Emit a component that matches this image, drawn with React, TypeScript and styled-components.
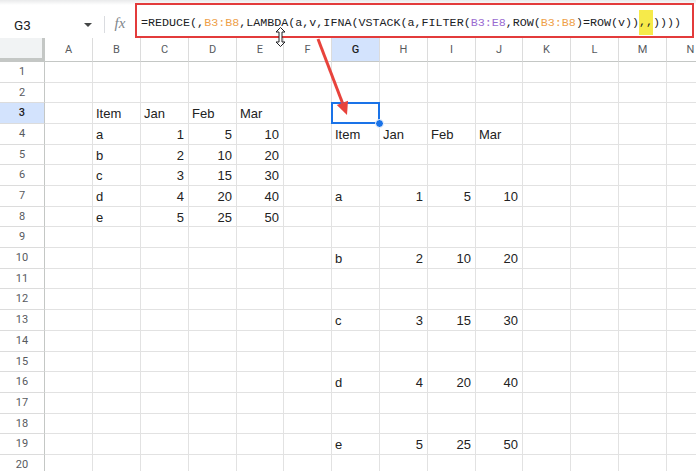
import React from "react";
import styled, { createGlobalStyle } from "styled-components";

const GlobalStyle = createGlobalStyle`
  html, body {
    margin: 0;
    padding: 0;
    background: #ffffff;
  }
  body {
    font-family: "Liberation Sans", Arial, sans-serif;
  }
`;

const COLS = ["A", "B", "C", "D", "E", "F", "G", "H", "I", "J", "K", "L", "M", "N"];
const COL_WIDTHS = [48, 48, 48, 48, 47, 48, 48, 48, 48, 47, 48, 48, 48, 48];
const ROW_COUNT = 20;
const ROW_HEIGHTS = Array.from({ length: ROW_COUNT }, (_, i) =>
  Math.round((i + 1) * 20.68) - Math.round(i * 20.68)
);

const SELECTED_COL = "G";
const SELECTED_ROW = 3;

const data: Record<string, string | number> = {
  B3: "Item", C3: "Jan", D3: "Feb", E3: "Mar",
  B4: "a", C4: 1, D4: 5, E4: 10,
  B5: "b", C5: 2, D5: 10, E5: 20,
  B6: "c", C6: 3, D6: 15, E6: 30,
  B7: "d", C7: 4, D7: 20, E7: 40,
  B8: "e", C8: 5, D8: 25, E8: 50,
  G4: "Item", H4: "Jan", I4: "Feb", J4: "Mar",
  G7: "a", H7: 1, I7: 5, J7: 10,
  G10: "b", H10: 2, I10: 10, J10: 20,
  G13: "c", H13: 3, I13: 15, J13: 30,
  G16: "d", H16: 4, I16: 20, J16: 40,
  G19: "e", H19: 5, I19: 25, J19: 50,
};

const Page = styled.div`
  position: relative;
  width: 696px;
  height: 471px;
  overflow: hidden;
  background: #fff;
`;

const TopBar = styled.div`
  display: flex;
  align-items: stretch;
  height: 38px;
  padding-top: 3px;
  box-sizing: border-box;
  background: linear-gradient(#e9eaeb 0px, #ffffff 5px);
`;

const NameBox = styled.div`
  width: 105px;
  height: 17px;
  align-self: flex-start;
  margin-top: 13px;
  display: flex;
  align-items: center;
  justify-content: space-between;
  padding: 0 12px 0 14px;
  box-sizing: border-box;
  border-right: 1px solid #dadce0;
  font-family: Roboto, "Liberation Sans", sans-serif;
  font-size: 13.5px;
  color: #202124;
`;

const Caret = styled.span`
  width: 0;
  height: 0;
  border-left: 4px solid transparent;
  border-right: 4px solid transparent;
  border-top: 4px solid #444746;
`;

const Fx = styled.div`
  width: 30px;
  display: flex;
  align-items: center;
  justify-content: center;
  padding-top: 5px;
  font-family: "Liberation Serif", "DejaVu Serif", serif;
  font-style: italic;
  font-size: 15px;
  color: #80868b;
`;

const FormulaBox = styled.div`
  flex: 1;
  margin-right: 2px;
  border: 2px solid #e33b3b;
  display: flex;
  align-items: center;
  padding: 4px 0 0 4px;
  box-sizing: border-box;
  font-family: "Liberation Mono", "DejaVu Sans Mono", monospace;
  font-size: 11.7px;
  color: #202124;
  white-space: pre;
  overflow: hidden;
`;

const Ref = styled.span<{ $tone: "orange" | "purple" }>`
  color: ${(p) => (p.$tone === "orange" ? "#eea049" : "#9a6bd1")};
`;

const Mark = styled.span`
  background: #f6ea4a;
  padding: 5px 0 6px;
`;

const Grid = styled.div`
  display: grid;
  grid-template-columns: 45px ${COL_WIDTHS.map((w) => `${w}px`).join(" ")};
  grid-template-rows: 24px ${ROW_HEIGHTS.map((h) => `${h}px`).join(" ")};
`;

const Corner = styled.div`
  box-sizing: border-box;
  background: #f1f3f4;
  border-right: 3px solid #c4c7c5;
  border-bottom: 4px solid #c4c7c5;
`;

const ColHeader = styled.div<{ $active?: boolean }>`
  box-sizing: border-box;
  display: flex;
  align-items: center;
  justify-content: center;
  background: ${(p) => (p.$active ? "#d3e3fd" : "#ffffff")};
  border-right: 1px solid #dcdcdc;
  border-bottom: 1px solid #c4c7c5;
  font-family: Roboto, "Liberation Sans", sans-serif;
  font-size: 11px;
  color: ${(p) => (p.$active ? "#1f1f1f" : "#575a5e")};
  font-weight: ${(p) => (p.$active ? 500 : 400)};
`;

const RowHeader = styled.div<{ $active?: boolean }>`
  box-sizing: border-box;
  display: flex;
  align-items: center;
  justify-content: center;
  padding-bottom: 1px;
  line-height: 1;
  background: ${(p) => (p.$active ? "#d3e3fd" : "#ffffff")};
  border-right: 1px solid #c4c7c5;
  border-bottom: 1px solid #dcdcdc;
  font-family: Roboto, "Liberation Sans", sans-serif;
  font-size: 11px;
  color: ${(p) => (p.$active ? "#1f1f1f" : "#575a5e")};
  font-weight: ${(p) => (p.$active ? 500 : 400)};
`;

const Cell = styled.div<{ $num?: boolean; $selected?: boolean }>`
  position: relative;
  box-sizing: border-box;
  display: flex;
  align-items: center;
  justify-content: ${(p) => (p.$num ? "flex-end" : "flex-start")};
  padding: 1px 4px 0 3px;
  border-right: 1px solid #e2e2e2;
  border-bottom: 1px solid #e2e2e2;
  font-size: 13px;
  color: #222222;
  white-space: nowrap;

  ${(p) =>
    p.$selected &&
    `
    &::before {
      content: "";
      position: absolute;
      left: -1px;
      top: -1px;
      right: -1px;
      bottom: -1px;
      border: 2px solid #1a73e8;
    }
    &::after {
      content: "";
      position: absolute;
      right: -5px;
      bottom: -5px;
      width: 7px;
      height: 7px;
      border-radius: 50%;
      background: #1a73e8;
      border: 1px solid #ffffff;
      z-index: 2;
    }
  `}
`;

const Arrow = styled.svg`
  position: absolute;
  left: 310px;
  top: 36px;
  width: 50px;
  height: 85px;
  pointer-events: none;
`;

const Cursor = styled.svg`
  position: absolute;
  left: 275px;
  top: 27px;
  width: 11px;
  height: 20px;
  pointer-events: none;
`;

function Formula() {
  return (
    <FormulaBox>
      {"=REDUCE(,"}
      <Ref $tone="orange">B3:B8</Ref>
      {",LAMBDA(a,v,IFNA(VSTACK(a,FILTER("}
      <Ref $tone="purple">B3:E8</Ref>
      {",ROW("}
      <Ref $tone="orange">B3:B8</Ref>
      {")=ROW(v))"}
      <Mark>,,</Mark>
      {"))))"}
    </FormulaBox>
  );
}

export default function App() {
  return (
    <Page>
      <GlobalStyle />
      <TopBar>
        <NameBox>
          <span>G3</span>
          <Caret />
        </NameBox>
        <Fx>fx</Fx>
        <Formula />
      </TopBar>
      <Grid>
        <Corner />
        {COLS.map((c) => (
          <ColHeader key={c} $active={c === SELECTED_COL}>
            {c}
          </ColHeader>
        ))}
        {ROW_HEIGHTS.map((_, i) => {
          const row = i + 1;
          return (
            <React.Fragment key={row}>
              <RowHeader $active={row === SELECTED_ROW}>{row}</RowHeader>
              {COLS.map((c) => {
                const v = data[`${c}${row}`];
                return (
                  <Cell
                    key={c}
                    $num={typeof v === "number"}
                    $selected={c === SELECTED_COL && row === SELECTED_ROW}
                  >
                    {v}
                  </Cell>
                );
              })}
            </React.Fragment>
          );
        })}
      </Grid>
      <Arrow viewBox="0 0 50 85">
        <line x1="8" y1="3" x2="32.4" y2="66.8" stroke="#e8433c" strokeWidth="3" />
        <polygon points="37,79 38,64.7 26.8,68.9" fill="#e8433c" />
      </Arrow>
      <Cursor viewBox="0 0 11 20">
        <path
          d="M5.5 0.5 L10 5 L7 5 L7 15 L10 15 L5.5 19.5 L1 15 L4 15 L4 5 L1 5 Z"
          fill="#ffffff"
          stroke="#202124"
          strokeWidth="1"
        />
      </Cursor>
    </Page>
  );
}
